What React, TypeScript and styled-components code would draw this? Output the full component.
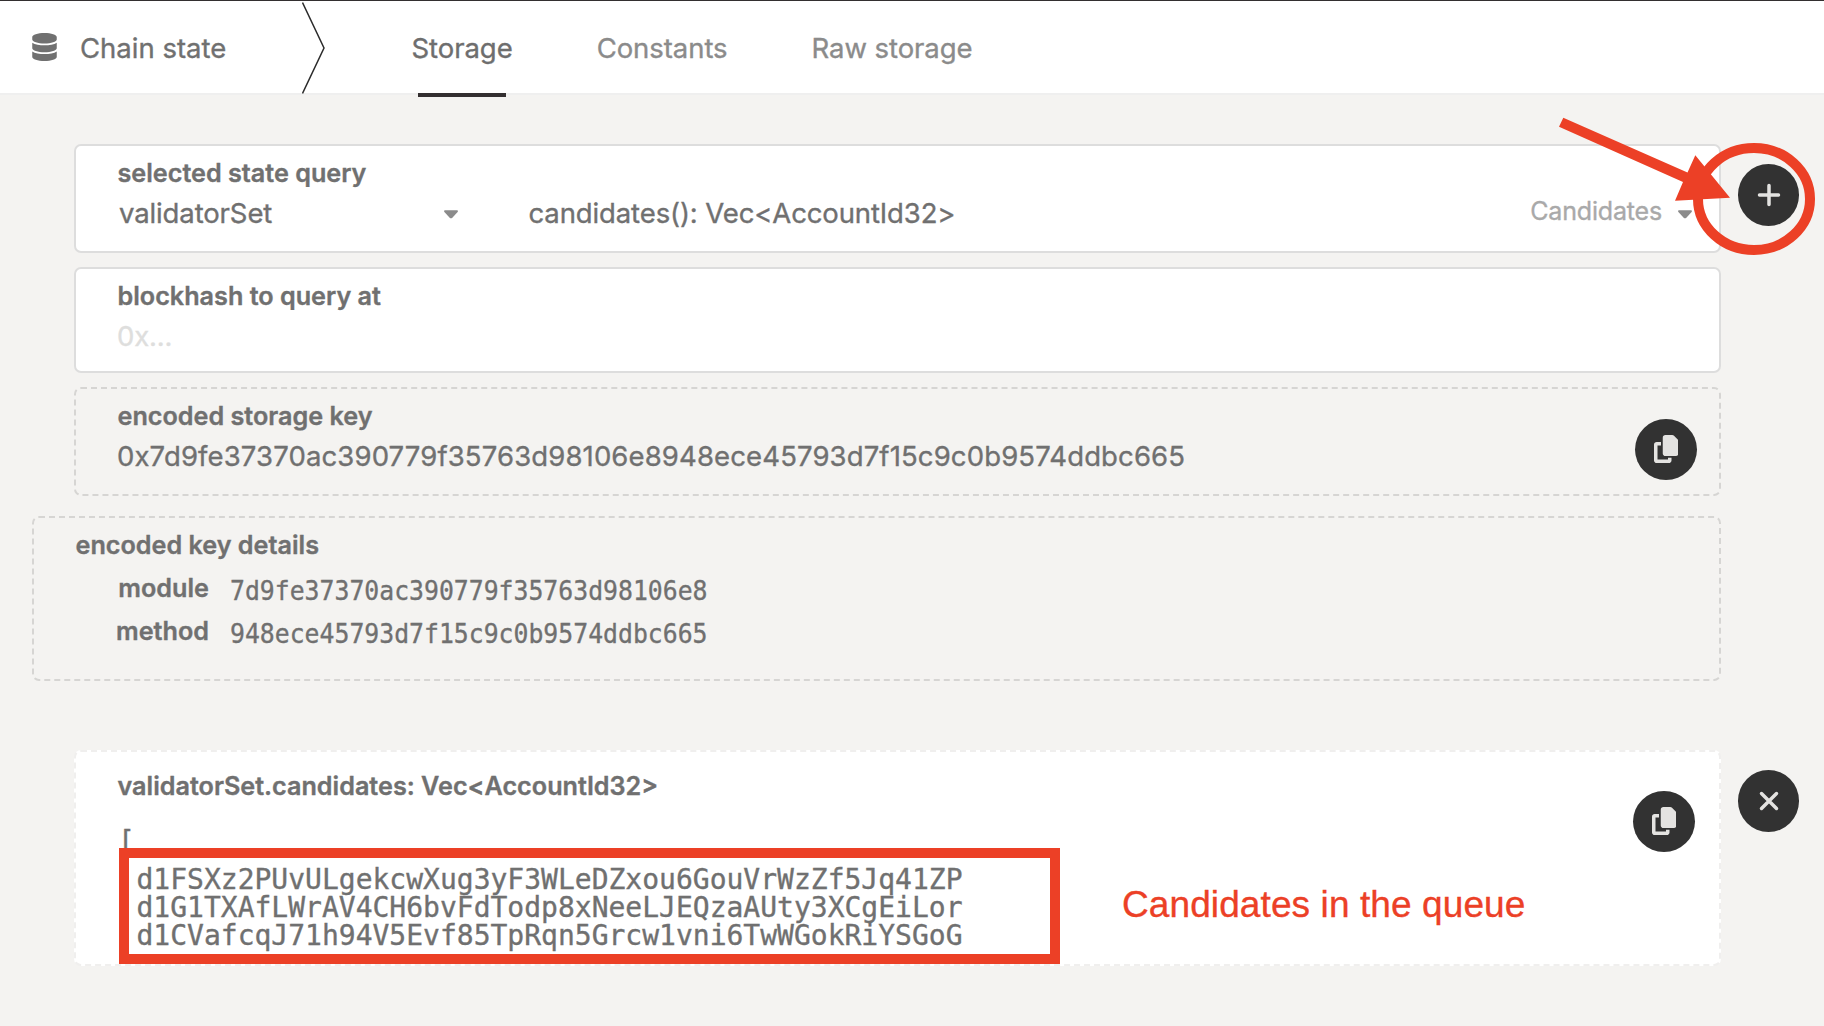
import React from "react";
import styled, { createGlobalStyle } from "styled-components";
import { FaDatabase } from "react-icons/fa";

const SANS = `Inter, "Liberation Sans", sans-serif`;
const MONO = `"DejaVu Sans Mono", "Liberation Mono", monospace`;
const RED = "#ec4026";

const GlobalStyle = createGlobalStyle`
  *, *::before, *::after { box-sizing: border-box; }
  body { margin: 0; background: #f4f3f1; }
`;

const Page = styled.div`
  position: relative;
  display: flex;
  flex-direction: column;
  width: 1824px;
  height: 1026px;
  overflow: hidden;
  background: #f4f3f1;
  color: #707070;
  font-family: ${SANS};
  font-size: 27.5px;
  line-height: 40px;
  white-space: nowrap;
  -webkit-text-stroke: 0.35px currentColor;
`;

const Header = styled.header`
  display: flex;
  height: 95px;
  border-top: 1px solid #332f30;
  border-bottom: 2px solid #efefef;
  background: #fff;
`;

const Brand = styled.div`
  display: flex;
  align-items: center;
  width: 302px;
  padding: 2px 0 0 32px;
  gap: 23px;

  svg {
    width: 25px;
    height: 28px;
    margin-top: -3px;
  }
`;

const Chevron = styled.svg`
  width: 24px;
  height: 94px;
  flex: none;
`;

const Tabs = styled.nav`
  display: flex;
  margin-left: 85.5px;
  gap: 84px;
  letter-spacing: -0.06px;
`;

const Tab = styled.div<{ $active?: boolean }>`
  position: relative;
  display: flex;
  align-items: center;
  padding-top: 2px;
  color: ${(p) => (p.$active ? "#6e6e6e" : "#8b8b8b")};

  &::after {
    content: "";
    display: ${(p) => (p.$active ? "block" : "none")};
    position: absolute;
    left: 6.5px;
    bottom: -4px;
    width: 88px;
    height: 4px;
    background: #332f30;
  }
`;

const Content = styled.main`
  display: flex;
  flex-direction: column;
  padding: 49px 0 0 74px;
`;

const Row = styled.div<{ $gap?: number }>`
  display: flex;
  align-items: flex-start;
  gap: 17px;
  margin-top: ${(p) => p.$gap ?? 0}px;
`;

const Card = styled.section<{ $h: number; $dashed?: boolean }>`
  position: relative;
  display: flex;
  justify-content: space-between;
  width: 1647px;
  height: ${(p) => p.$h}px;
  padding: 10px 22px 0 41px;
  border: 2px ${(p) => (p.$dashed ? "dashed #d6d5d3" : "solid #dddddd")};
  border-radius: 7px;
  background: ${(p) => (p.$dashed ? "transparent" : "#fff")};
`;

const DetailsCard = styled(Card)`
  width: 1689px;
  margin-left: -42px;
`;

const ResultCard = styled(Card)`
  padding: 17px 24px 0 41px;
  border: 2px dashed #f0efee;
  background: #fff;
`;

const Body = styled.div`
  display: flex;
  flex: 1;
  flex-direction: column;
  gap: 3px;
`;

const Label = styled.div`
  padding-left: 0.5px;
  font-size: 25.2px;
  font-weight: 600;
  line-height: 34px;
`;

const Value = styled.div<{ $muted?: boolean; $spacing?: number }>`
  color: ${(p) => (p.$muted ? "#dededd" : "inherit")};
  letter-spacing: ${(p) => p.$spacing ?? 0}px;
`;

const QueryRow = styled.div`
  display: flex;
  align-items: center;
  height: 40px;
  padding: 0 5px 0 2px;
  letter-spacing: -0.12px;
`;

const ModuleSelect = styled.div`
  display: flex;
  align-items: center;
  justify-content: space-between;
  width: 339px;
`;

const MethodSelect = styled.div`
  display: flex;
  flex: 1;
  align-items: center;
  margin-left: 70.5px;
`;

const Hint = styled.span`
  margin: -5px 16px 0 auto;
  color: #a9a9a9;
  font-size: 25px;
  letter-spacing: -0.17px;
`;

const CaretIcon = styled.svg`
  width: 14px;
  height: 9px;
  margin-top: 2px;
  fill: #8b8b8b;
`;

const RoundButton = styled.button<{ $top: number }>`
  display: flex;
  flex: none;
  align-items: center;
  justify-content: center;
  width: 61px;
  height: 61.5px;
  margin: ${(p) => p.$top}px 0 0;
  padding: 0;
  border: 0;
  border-radius: 50%;
  background: #323232;
  color: #e4e3e1;
`;

const CopyButton = styled(RoundButton)`
  width: 62px;
  height: 61px;
`;

const KeyRow = styled.div`
  display: flex;
  height: 40px;
  margin-top: 6px;

  & + & {
    margin-top: 0;
  }
`;

const KeyName = styled(Label)`
  width: 134px;
  text-align: right;
`;

const KeyHash = styled.div`
  margin-left: 21px;
  padding-top: 3px;
  font-family: ${MONO};
  font-size: 27px;
  line-height: 34px;
  transform: scaleX(0.918);
  transform-origin: 0 0;
`;

const Output = styled.div`
  display: flex;
  flex-direction: column;
  margin: 22px 0 0 1px;
  font-family: ${MONO};
  font-size: 28px;
  line-height: 28px;
`;

const Accounts = styled.div`
  display: flex;
  flex-direction: column;
  margin: 10px 0 0 18.5px;
`;

const Frame = styled.div`
  position: absolute;
  left: 43px;
  top: 96px;
  width: 941px;
  height: 116px;
  border: 10px solid ${RED};
`;

const Note = styled.div`
  position: absolute;
  left: 1046px;
  top: 131px;
  color: ${RED};
  font-family: "Liberation Sans", Arial, sans-serif;
  font-size: 37px;
  line-height: 44px;
  letter-spacing: 0.1px;
`;

const Pointer = styled.svg`
  position: absolute;
  left: 1550px;
  top: 110px;
  width: 274px;
  height: 150px;
`;

const Caret = () => (
  <CaretIcon viewBox="0 0 14 9">
    <path d="M1.1.3h11.8c.9 0 1.3 1 .7 1.7L8.1 7.9c-.6.6-1.6.6-2.2 0L.4 2C-.2 1.300.2.3 1.100.3z" />
  </CaretIcon>
);

const CopyIcon = () => (
  <svg width="24.5" height="28" viewBox="0 0 448 512" fill="currentColor">
    <path d="M208 0L332.100 0c12.700 0 24.900 5.100 33.900 14.100l67.900 67.900c9 9 14.100 21.200 14.100 33.900L448 336c0 26.500-21.500 48-48 48l-192 0c-26.500 0-48-21.500-48-48l0-288c0-26.500 21.500-48 48-48zM48 128l80 0 0 64-64 0 0 256 192 0 0-32 64 0 0 48c0 26.500-21.500 48-48 48L48 512c-26.500 0-48-21.500-48-48L0 176c0-26.500 21.500-48 48-48z" />
  </svg>
);

const StrokeIcon = ({ d }: { d: string }) => (
  <svg width="24" height="24" viewBox="0 0 24 24" fill="none" stroke="currentColor" strokeWidth="3.5" strokeLinecap="round">
    <path d={d} />
  </svg>
);

const accounts = [
  "d1FSXz2PUvULgekcwXug3yF3WLeDZxou6GouVrWzZf5Jq41ZP",
  "d1G1TXAfLWrAV4CH6bvFdTodp8xNeeLJEQzaAUty3XCgEiLor",
  "d1CVafcqJ71h94V5Evf85TpRqn5Grcw1vni6TwWGokRiYSGoG",
];

const keyParts = [
  { name: "module", hash: "7d9fe37370ac390779f35763d98106e8" },
  { name: "method", hash: "948ece45793d7f15c9c0b9574ddbc665" },
];

export default function App() {
  return (
    <>
      <GlobalStyle />
      <Page>
        <Header>
          <Brand>
            <FaDatabase />
            <span>Chain state</span>
          </Brand>
          <Chevron viewBox="0 0 24 94">
            <path d="M.5 1.500L22 47L.5 92.500" fill="none" stroke="#2b2b2b" strokeWidth="1.500" />
          </Chevron>
          <Tabs>
            <Tab $active>Storage</Tab>
            <Tab>Constants</Tab>
            <Tab>Raw storage</Tab>
          </Tabs>
        </Header>

        <Content>
          <Row>
            <Card $h={109}>
              <Body>
                <Label>selected state query</Label>
                <QueryRow>
                  <ModuleSelect>
                    <span>validatorSet</span>
                    <Caret />
                  </ModuleSelect>
                  <MethodSelect>
                    <span>candidates(): Vec&lt;AccountId32&gt;</span>
                    <Hint>Candidates</Hint>
                    <Caret />
                  </MethodSelect>
                </QueryRow>
              </Body>
            </Card>
            <RoundButton $top={20} aria-label="Add query">
              <StrokeIcon d="M12 2.500V21.500M2.500 12H21.500" />
            </RoundButton>
          </Row>

          <Row $gap={14}>
            <Card $h={106}>
              <Body>
                <Label>blockhash to query at</Label>
                <Value $muted $spacing={-0.2}>0x...</Value>
              </Body>
            </Card>
          </Row>

          <Row $gap={14}>
            <Card $h={109} $dashed>
              <Body>
                <Label>encoded storage key</Label>
                <Value $spacing={0.13}>0x7d9fe37370ac390779f35763d98106e8948ece45793d7f15c9c0b9574ddbc665</Value>
              </Body>
              <CopyButton $top={19.5} aria-label="Copy key">
                <CopyIcon />
              </CopyButton>
            </Card>
          </Row>

          <Row $gap={20}>
            <DetailsCard $h={165} $dashed>
              <Body>
                <Label>encoded key details</Label>
                {keyParts.map((k) => (
                  <KeyRow key={k.name}>
                    <KeyName>{k.name}</KeyName>
                    <KeyHash>{k.hash}</KeyHash>
                  </KeyRow>
                ))}
              </Body>
            </DetailsCard>
          </Row>

          <Row $gap={69}>
            <ResultCard $h={216}>
              <Body>
                <Label>validatorSet.candidates: Vec&lt;AccountId32&gt;</Label>
                <Output>
                  <span>[</span>
                  <Accounts>
                    {accounts.map((a) => (
                      <span key={a}>{a}</span>
                    ))}
                  </Accounts>
                </Output>
              </Body>
              <CopyButton $top={21.5} aria-label="Copy result">
                <CopyIcon />
              </CopyButton>
              <Frame />
              <Note>Candidates in the queue</Note>
            </ResultCard>
            <RoundButton $top={20} aria-label="Remove result">
              <StrokeIcon d="M4.500 4.500L19.500 19.500M19.500 4.500L4.500 19.500" />
            </RoundButton>
          </Row>
        </Content>

        <Pointer viewBox="1550 110 274 150">
          <ellipse cx="1754" cy="199" rx="56" ry="51" fill="none" stroke={RED} strokeWidth="10" />
          <path d="M1563.300 117.700L1687.500 172.500L1695.300 155.300L1730 197.800L1675 200.700L1683 182L1559 126.700z" fill={RED} />
        </Pointer>
      </Page>
    </>
  );
}
